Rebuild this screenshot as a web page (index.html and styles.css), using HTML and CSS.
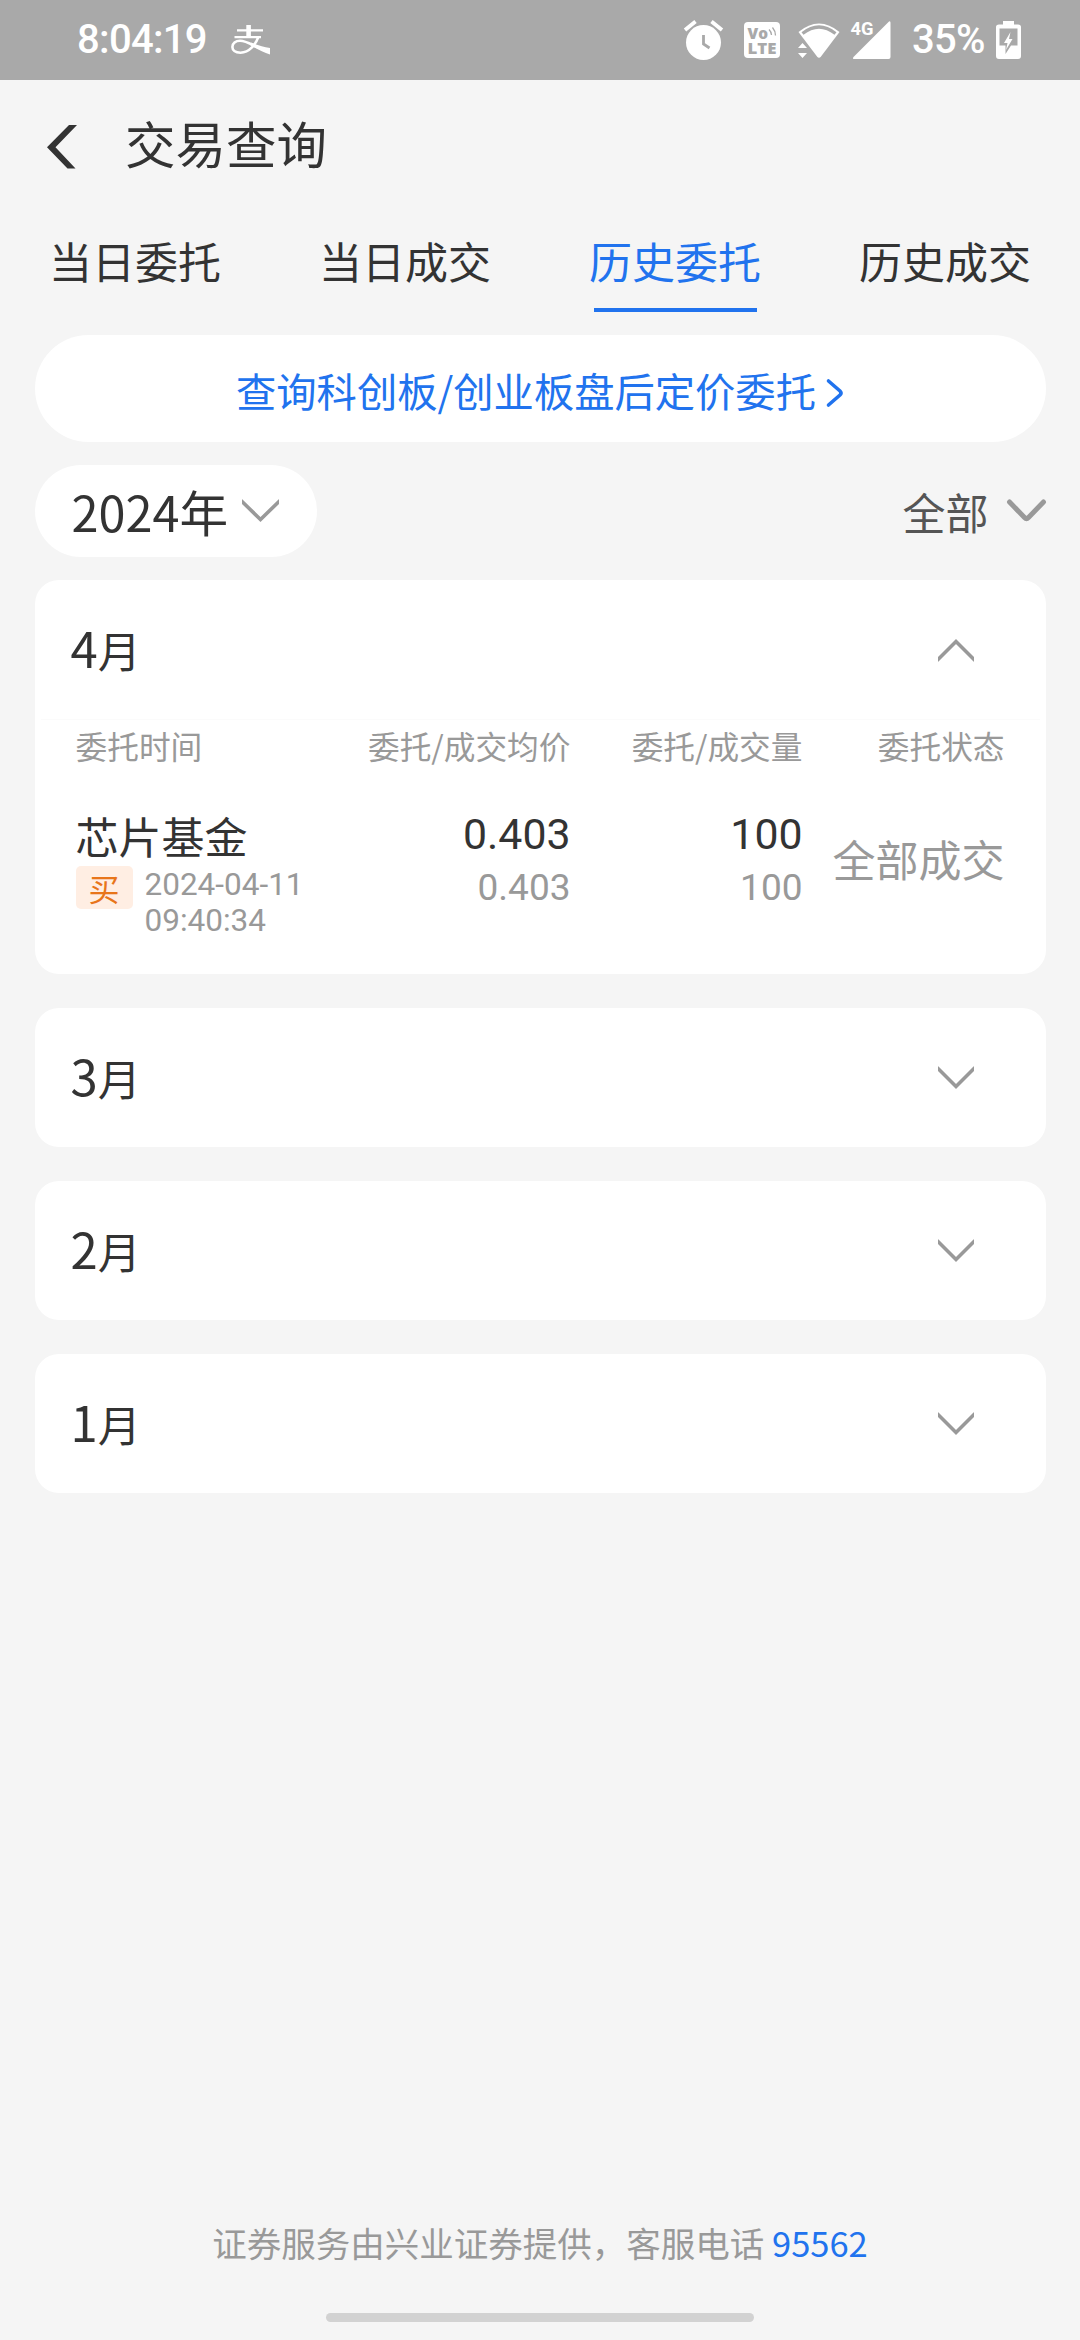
FILE: index.html
```html
<!DOCTYPE html>
<html lang="zh-CN">
<head>
<meta charset="utf-8">
<title>交易查询</title>
<link rel="stylesheet" href="styles.css">
</head>
<body>
<div class="screen">
  <div class="status-bar">
    <span class="clock">8:04:19</span>
    <svg class="pay-icon" width="40" height="32" viewBox="0 0 40 32" fill="none" stroke="#fff">
      <path d="M6 6.4H32M3.5 13.2H30" stroke-width="2.2"/>
      <path d="M17.6 1V13" stroke-width="4.6"/>
      <path d="M27.5 12.5C25 20 18.500 28.700 9.500 28.700C4 28.700 1.400 26.300 1.400 23C1.400 19.500 4.500 16.800 9 16.800C15.500 16.800 21 21 28 24" stroke-width="2.600"/>
      <path d="M20 18.600C26 20.800 32 22.800 39 24V30.500C32 28 25 24.500 19 21Z" fill="#fff" stroke="none"/>
    </svg>
    <svg class="alarm-icon" width="42" height="42" viewBox="0 0 42 42">
      <circle cx="20.500" cy="23.500" r="17.500" fill="#fff"/>
      <path d="M2 11L12.500 2.500M39 11L28.500 2.500" stroke="#fff" stroke-width="3.800"/>
      <path d="M20.500 16V25L26.500 29" fill="none" stroke="#a9a9a9" stroke-width="2.800"/>
    </svg>
    <svg class="volte-icon" width="36" height="36" viewBox="0 0 36 36">
      <rect width="36" height="36" rx="4" fill="#fff"/>
      <text class="volte-text" x="3.500" y="16.700" textLength="20.500" lengthAdjust="spacingAndGlyphs">Vo</text>
      <text class="volte-text" x="3.500" y="32.300" textLength="29" lengthAdjust="spacingAndGlyphs">LTE</text>
      <path d="M25 7.500Q27.500 10 27.500 13M28.500 5.500Q31.500 9 31.500 13.500" fill="none" stroke="#a9a9a9" stroke-width="1.300"/>
    </svg>
    <svg class="wifi-icon" width="42" height="36" viewBox="0 0 42 36">
      <path d="M0.500 9Q21-8 41.500 9L23 33.500Q21 36 19 33.500Z" fill="#fff"/>
      <path d="M4.500 10.500Q21-2.500 37.500 10.500" fill="none" stroke="#a9a9a9" stroke-width="3.200"/>
      <path d="M4.500 18.500L10.500 26.500H-1Z" fill="#a9a9a9"/>
      <path d="M0 25L4.500 20L9 25ZM0 30H9L4.500 35Z" fill="#fff"/>
    </svg>
    <svg class="signal-icon" width="42" height="38" viewBox="0 0 42 38">
      <path d="M39 0.500Q40.500-0.500 40.500 2V36Q40.500 38 38.500 38H4.500Q2 38 3.500 36Z" fill="#fff"/>
      <text class="net-text" x="0.500" y="14" textLength="23" lengthAdjust="spacingAndGlyphs">4G</text>
    </svg>
    <span class="battery-text">35%</span>
    <svg class="battery-icon" width="25" height="38" viewBox="0 0 25 38">
      <path d="M7 3.500V0H18V3.500H22Q25 3.500 25 6V35Q25 38 22 38H3Q0 38 0 35V6Q0 3.500 3 3.500Z" fill="#fff"/>
      <path d="M3.500 7.500H21.500V24.500H15L9.500 33V24.500H3.500Z" fill="#a9a9a9"/>
      <path d="M14.500 11L8 22H11.500L10 29L16.500 18H13Z" fill="#fff"/>
    </svg>
  </div>

  <header class="title-bar">
    <svg class="back-icon" width="30" height="44" viewBox="0 0 30 44" fill="#333"><path d="M22 0H30L8.500 22.300L28.500 43.500H20.500L0 22.300Z"/></svg>
    <h1 class="title">交易查询</h1>
  </header>

  <nav class="tabs">
    <span class="tab">当日委托</span>
    <span class="tab">当日成交</span>
    <span class="tab tab-active">历史委托</span>
    <span class="tab">历史成交</span>
  </nav>

  <main class="content">
    <a class="link-pill">
      <span>查询科创板/创业板盘后定价委托</span>
      <svg width="18" height="30" viewBox="0 0 18 30" fill="none" stroke="#2173ee" stroke-width="3.600" stroke-linecap="round"><path d="M2.500 3L14 13Q16 15 14 17L2.500 27"/></svg>
    </a>

    <div class="filters">
      <div class="year-pill">
        <span>2024年</span>
        <svg class="chevron" width="37" height="24" viewBox="0 0 37 24"><path d="M-1 1.500L18.500 20.500L38 1.500"/></svg>
      </div>
      <div class="type-filter">
        <span>全部</span>
        <svg class="chevron chevron-round" width="39" height="24" viewBox="0 0 39 24"><path d="M2.500 3L17.500 18.500Q19.500 20.500 21.500 18.500L36.500 3"/></svg>
      </div>
    </div>

    <section class="card">
      <div class="month">
        <span class="month-name"><span class="month-number">4</span>月</span>
        <svg class="chevron" width="36" height="24" viewBox="0 0 36 24"><path d="M-1 22.500L18 3.500L37 22.500"/></svg>
      </div>
      <div class="orders">
        <div class="order-head">
          <span>委托时间</span>
          <span>委托/成交均价</span>
          <span>委托/成交量</span>
          <span>委托状态</span>
        </div>
        <div class="order">
          <div class="order-info">
            <div class="fund">芯片基金</div>
            <div class="order-when">
              <span class="side">买</span>
              <time class="time">2024-04-11<br>09:40:34</time>
            </div>
          </div>
          <div class="figures"><div>0.403</div><div class="dealt">0.403</div></div>
          <div class="figures"><div>100</div><div class="dealt">100</div></div>
          <div class="state">全部成交</div>
        </div>
      </div>
    </section>

    <section class="card"><div class="month">
      <span class="month-name"><span class="month-number">3</span>月</span>
      <svg class="chevron" width="36" height="24" viewBox="0 0 36 24"><path d="M-1 1.500L18 20.500L37 1.500"/></svg>
    </div></section>
    <section class="card"><div class="month">
      <span class="month-name"><span class="month-number">2</span>月</span>
      <svg class="chevron" width="36" height="24" viewBox="0 0 36 24"><path d="M-1 1.500L18 20.500L37 1.500"/></svg>
    </div></section>
    <section class="card"><div class="month">
      <span class="month-name"><span class="month-number">1</span>月</span>
      <svg class="chevron" width="36" height="24" viewBox="0 0 36 24"><path d="M-1 1.500L18 20.500L37 1.500"/></svg>
    </div></section>
  </main>

  <footer class="footer">证券服务由兴业证券提供，客服电话 <a class="phone">95562</a></footer>
  <div class="home-bar"></div>
</div>
</body>
</html>
```
FILE: styles.css
```css
* { box-sizing: border-box; }
body {
  margin: 0;
  background: #f5f5f5;
  color: #333;
  font-family: "Noto Sans CJK SC", sans-serif;
}
svg { display: block; flex: none; overflow: visible; }
.screen {
  width: 1080px;
  height: 2340px;
  display: flex;
  flex-direction: column;
  overflow: hidden;
}

/* Status bar */
.status-bar {
  height: 80px;
  flex: none;
  display: flex;
  align-items: flex-start;
  padding-left: 77px;
  background: #a9a9a9;
  color: #fff;
  font: 500 40px/80px Roboto, sans-serif;
}
.clock { width: 154px; letter-spacing: -0.7px; }
.pay-icon { margin-top: 24px; }
.alarm-icon { margin: 19px 0 0 412px; }
.volte-icon { margin: 22px 0 0 19px; }
.wifi-icon { margin: 23px 0 0 18px; }
.signal-icon { margin: 21px 0 0 10px; }
.battery-text { width: 84px; margin-left: 20px; letter-spacing: -0.7px; }
.battery-icon { margin: 21px 0 0 0; }
.volte-text { font: 800 16.500px "Open Sans", sans-serif; fill: #a9a9a9; }
.net-text { font: 700 18.500px Roboto, sans-serif; fill: #fff; }

/* Title */
.title-bar {
  height: 124px;
  flex: none;
  display: flex;
  align-items: flex-start;
  padding-left: 47px;
}
.back-icon { margin-top: 45px; }
.title { margin: 0 0 0 48px; font-size: 50.500px; font-weight: 400; line-height: 124px; }

/* Tabs */
.tabs { height: 131px; flex: none; display: grid; grid-template-columns: repeat(4, 1fr); }
.tab {
  height: 108px;
  justify-self: center;
  font-size: 43px;
  line-height: 113px;
  white-space: nowrap;
}
.tab-active { color: #2173ee; }
.tab-active::after {
  content: "";
  display: block;
  width: 163px;
  height: 4px;
  margin: -9px auto 0;
  background: #2173ee;
}

.content { flex: 1; padding: 0 34.500px; }
.link-pill {
  height: 107px;
  display: flex;
  align-items: center;
  justify-content: center;
  gap: 10px;
  border-radius: 54px;
  background: #fff;
  color: #2173ee;
  font-size: 40.300px;
  line-height: 109px;
}
.link-pill span { height: 107px; }
.link-pill svg { margin-top: 9px; }

/* Filters */
.filters { display: flex; justify-content: space-between; align-items: center; margin: 23px 0; height: 92px; }
.year-pill {
  width: 282px;
  height: 92px;
  display: flex;
  align-items: center;
  gap: 14px;
  padding-left: 37px;
  border-radius: 46px;
  background: #fff;
  font-size: 48.600px;
  line-height: 92px;
}
.type-filter { display: flex; align-items: center; gap: 18px; color: #555; font-size: 43px; line-height: 92px; }
.chevron { fill: none; stroke: #999; stroke-width: 3.600px; }
.chevron-round { stroke-width: 5px; stroke-linecap: round; }
.month .chevron, .year-pill .chevron { overflow: hidden; }

/* Month cards */
.card { margin-bottom: 34px; border-radius: 24px; background: #fff; }
.month {
  height: 139px;
  display: flex;
  align-items: center;
  justify-content: space-between;
  padding: 0 72px 0 36px;
}
.month-name { height: 139px; font-size: 43px; line-height: 133px; }
.month-number { font-size: 49px; }
.orders { height: 255px; margin: 0 6px; padding: 0 35px; border-top: 1px solid #fbfbfb; }
.order-head, .order { display: grid; grid-template-columns: 260px 235px 232px 202px; }
.order-head { height: 90px; padding-top: 1px; color: #999; font-size: 31.700px; line-height: 48px; }
.order-head span:not(:first-child), .figures, .state { text-align: right; white-space: nowrap; }
.fund { height: 56px; font-size: 43px; line-height: 50px; }
.order-when { display: flex; gap: 12px; }
.side {
  width: 57px;
  height: 43px;
  border-radius: 5px;
  background: #ffeee3;
  color: #e8751a;
  font-size: 31px;
  line-height: 43px;
  text-align: center;
}
.time { padding-top: 1px; color: #999; font: 31.500px/36px Roboto, sans-serif; white-space: nowrap; }
.figures { font: 42.800px/48px Roboto, sans-serif; }
.dealt { padding-top: 2px; color: #999; font-size: 37px; line-height: 56px; }
.state { color: #999; font-size: 43px; line-height: 96px; }

.footer { height: 97px; flex: none; color: #999; font-size: 34.500px; line-height: 52px; text-align: center; }
.phone { color: #2173ee; }
.home-bar { width: 428px; height: 9px; flex: none; margin: 0 auto 18px; border-radius: 5px; background: #d2d2d2; }
```
